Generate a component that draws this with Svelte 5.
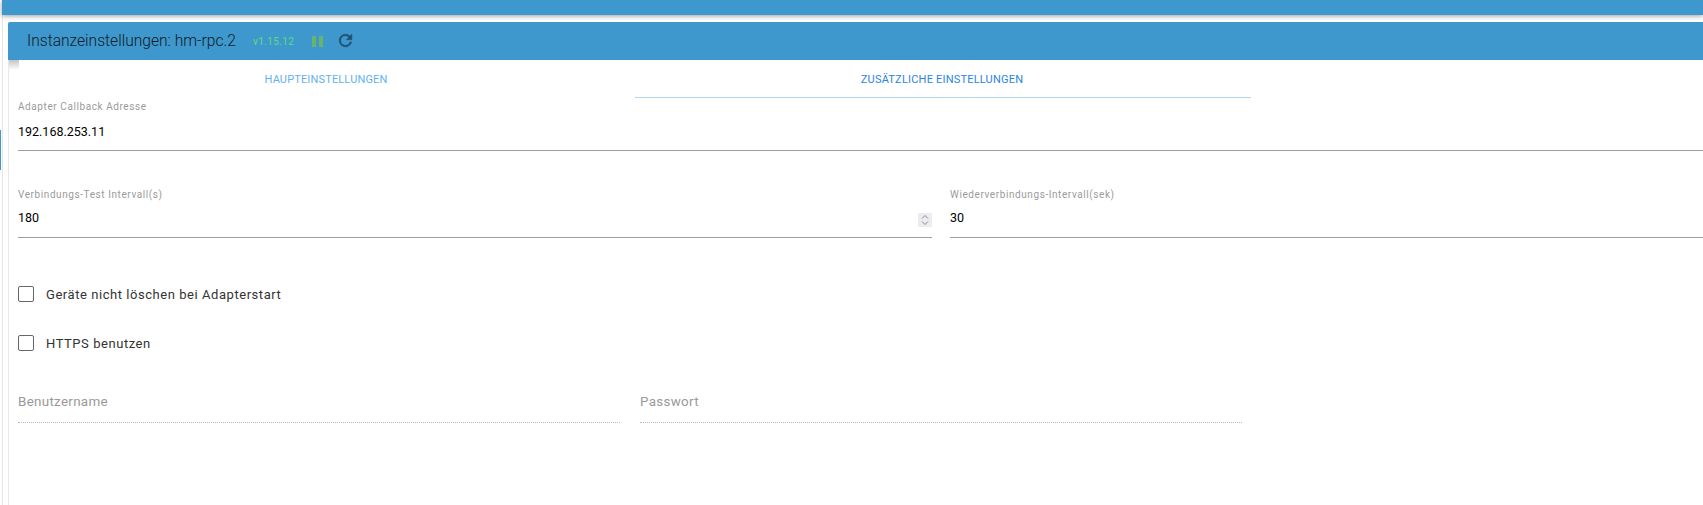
<script lang="ts">
let host = "192.168.253.11"
let checkInterval = 180
let reconnectInterval = 30
let user = ""
let password = ""
let keepDevices = false
let useHttps = false
</script>

<div class="page">
	<div class="rail">
		<span class="rail-mark"></span>
	</div>
	<div class="main">
		<div class="topbar"></div>
		<div class="content">
			<section class="card">
				<header class="card-head">
					<h1>Instanzeinstellungen: hm-rpc.2</h1>
					<span class="version">v1.15.12</span>
					<span class="pause"><i></i><i></i></span>
					<svg class="reload" viewBox="0 0 24 24" width="19" height="19">
						<path d="M17.65 6.35A7.95 7.95 0 0 0 12 4a8 8 0 1 0 7.73 10h-2.08A6 6 0 1 1 12 6c1.66 0 3.14.69 4.22 1.78L13 11h7V4l-2.35 2.35z" />
					</svg>
				</header>

				<nav class="tabs">
					<a href="#main" class="tab">HAUPTEINSTELLUNGEN</a>
					<a href="#extra" class="tab active">ZUSÄTZLICHE EINSTELLUNGEN</a>
				</nav>

				<div class="form">
					<label class="field host">
						<span class="caption">Adapter Callback Adresse</span>
						<input type="text" bind:value={host} />
					</label>

					<div class="row intervals">
						<label class="field">
							<span class="caption">Verbindungs-Test Intervall(s)</span>
							<input type="text" bind:value={checkInterval} />
							<span class="spinner">
								<svg viewBox="0 0 14 14" width="14" height="14">
									<path d="M4 5.5 7 2.5 10 5.5M4 8.5 7 11.5 10 8.5" />
								</svg>
							</span>
						</label>
						<label class="field">
							<span class="caption">Wiederverbindungs-Intervall(sek)</span>
							<input type="text" bind:value={reconnectInterval} />
						</label>
					</div>

					<label class="check first">
						<input type="checkbox" bind:checked={keepDevices} />
						<span>Geräte nicht löschen bei Adapterstart</span>
					</label>
					<label class="check second">
						<input type="checkbox" bind:checked={useHttps} />
						<span>HTTPS benutzen</span>
					</label>

					<div class="row creds">
						<label class="field off">
							<input type="text" placeholder="Benutzername" bind:value={user} disabled />
						</label>
						<label class="field off">
							<input type="password" placeholder="Passwort" bind:value={password} disabled />
						</label>
					</div>
				</div>
			</section>
		</div>
	</div>
</div>

<style>
:global(body) {
	background: #fff;
	font-family: Roboto, "Liberation Sans", sans-serif;
}

.page {
	display: flex;
	height: 505px;
	overflow: hidden;
}

.rail {
	width: 2px;
	flex: none;
	padding-top: 130px;
}

.rail-mark {
	display: block;
	width: 1px;
	height: 40px;
	background: #3e98cd;
}

.main {
	flex: 1;
	min-width: 0;
}

.topbar {
	position: relative;
	height: 15px;
	background: #3e98cd;
	box-shadow: 0 1px 5px rgba(0, 0, 0, 0.4);
}

.content {
	height: 490px;
	padding: 7px 0 0 5px;
	box-sizing: border-box;
	border-left: 1px solid #e6e6e6;
}

.card {
	height: 483px;
	border-left: 1px solid #e8e8e8;
}

.card-head {
	position: relative;
	display: flex;
	align-items: center;
	height: 38px;
	margin-left: -1px;
	padding-left: 19px;
	background: #3e98cd;
	border-radius: 2px 0 0 0;
}

/* stub of shadow under the left end of the header */
.card-head::after {
	content: "";
	position: absolute;
	left: 1px;
	top: 100%;
	width: 10px;
	height: 10px;
	background: linear-gradient(#c4c4c4, #fff);
}

h1 {
	margin: 0;
	font-size: 15.6px;
	font-weight: 300;
	color: #0e1a26;
}

.version {
	margin-left: 17px;
	font-size: 10px;
	letter-spacing: 0.4px;
	color: #5fdc7a;
}

.pause {
	display: flex;
	gap: 3px;
	margin-left: 18px;
}

.pause i {
	display: block;
	width: 4px;
	height: 11px;
	background: #66b56d;
}

.reload {
	margin: -1px 0 0 13px;
	fill: #20506f;
	stroke: #20506f;
	stroke-width: 0.7;
}

.tabs {
	display: flex;
	margin-left: 10px;
	height: 38px;
}

.tab {
	width: 616px;
	padding: 1px 2px 0 0;
	display: flex;
	align-items: center;
	justify-content: center;
	box-sizing: border-box;
	border-bottom: 1px solid transparent;
	font-size: 11px;
	letter-spacing: 0.15px;
	text-decoration: none;
	color: #64b0f2;
}

.active {
	color: #2a84e6;
	letter-spacing: 0.2px;
	border-bottom-color: #b5d5ee;
}

.form {
	padding-left: 9px;
}

.field {
	position: relative;
	display: block;
	flex: none;
}

.caption {
	display: block;
	font-size: 10px;
	letter-spacing: 0.58px;
	line-height: 12px;
	color: #9b9b9b;
}

.field input {
	display: block;
	width: 100%;
	box-sizing: border-box;
	padding: 0;
	border: 0;
	border-bottom: 1px solid #9e9e9e;
	outline: 0;
	background: none;
	font: inherit;
	font-size: 12.5px;
	color: #000;
}

.host {
	padding-top: 3px;
}

.host input {
	height: 38px;
}

.row {
	display: flex;
}

.intervals {
	gap: 18px;
	margin-top: 38px;
}

.intervals .field:first-child {
	width: 914px;
}

.intervals .field:last-child {
	flex: 1;
}

.intervals input {
	height: 37px;
	padding-bottom: 3px;
}

.spinner {
	position: absolute;
	right: 0;
	top: 24px;
	display: flex;
	background: #ececf0;
	height: 14px;
}

.spinner path {
	fill: none;
	stroke: #8b8b8b;
	stroke-width: 1;
}

.check {
	display: flex;
	align-items: center;
	gap: 12px;
	font-size: 13px;
	letter-spacing: 0.55px;
	color: #333;
}

.check input {
	appearance: none;
	width: 16px;
	height: 16px;
	margin: 0;
	box-sizing: border-box;
	border: 1.5px solid #666;
	border-radius: 2px;
}

.first {
	margin-top: 48px;
}

.second {
	margin-top: 33px;
}

.creds {
	gap: 20px;
	margin-top: 35px;
}

.off {
	width: 602px;
}

.off input {
	height: 37px;
	padding-bottom: 6px;
	font-size: 13.4px;
	letter-spacing: 0.3px;
	border-bottom: 1px dotted #bbb;
}

.off input::placeholder {
	color: #999;
	opacity: 1;
}
</style>
